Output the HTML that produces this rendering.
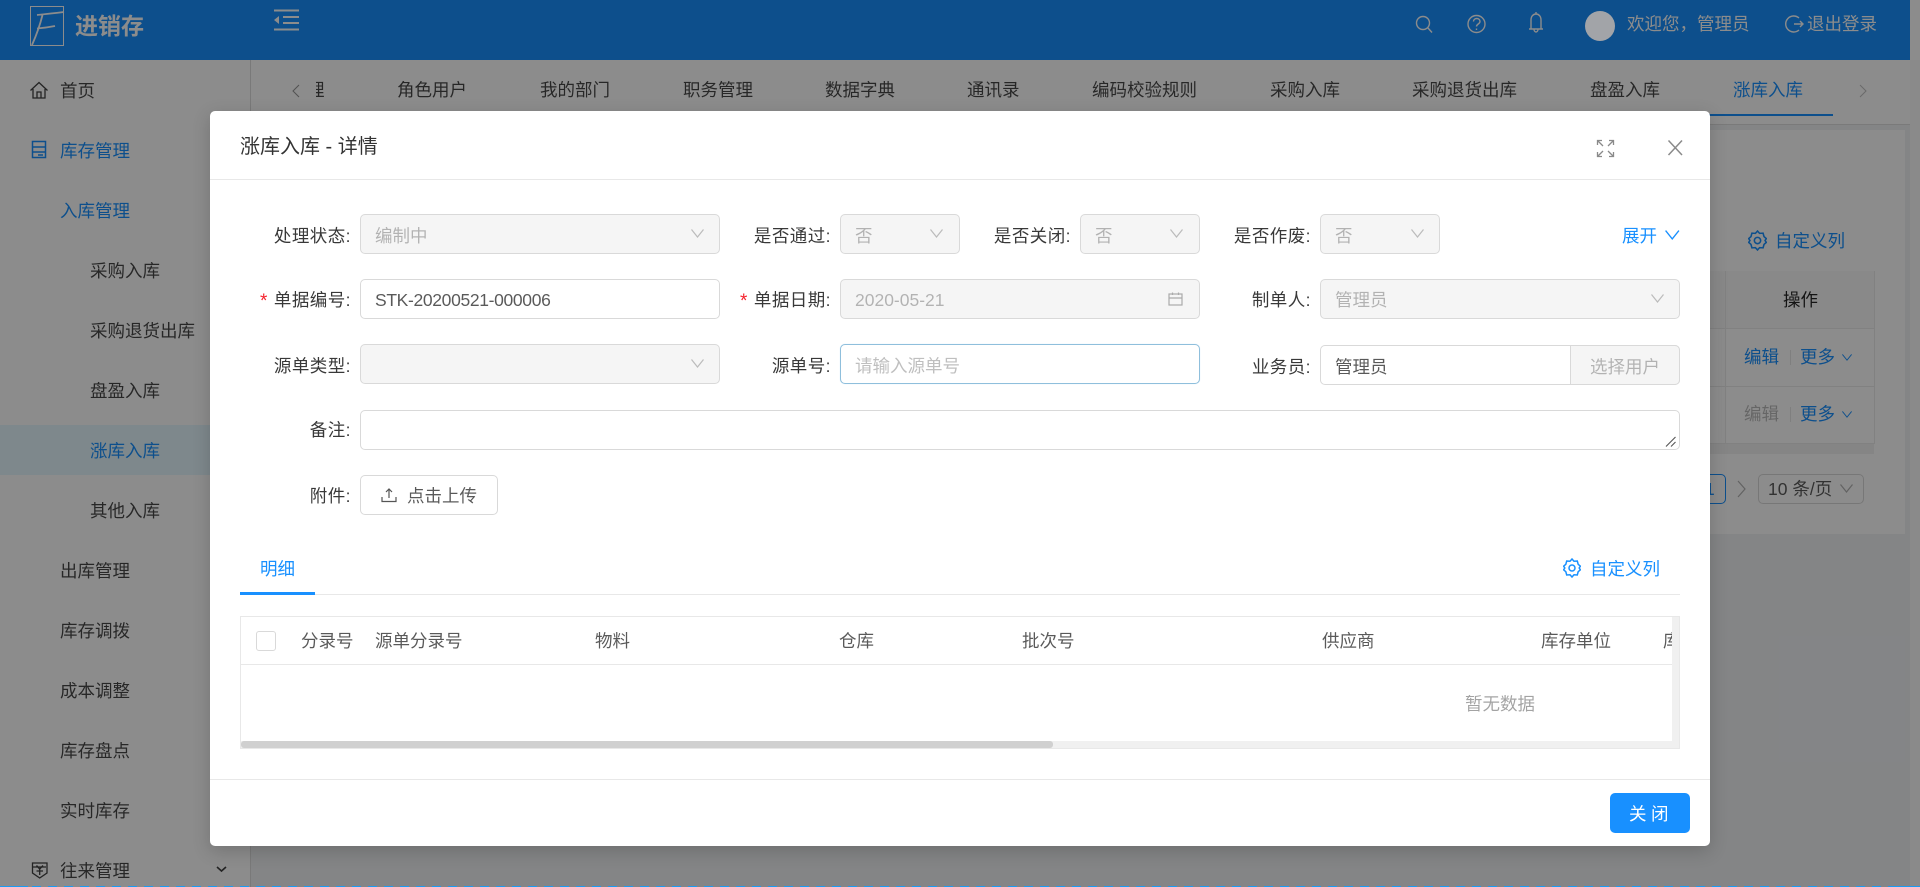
<!DOCTYPE html>
<html lang="zh-CN">
<head>
<meta charset="utf-8">
<title>进销存</title>
<style>
html,body{margin:0;padding:0;width:1920px;height:887px;overflow:hidden;background:#f0f2f5;}
body{position:relative;font-family:"Liberation Sans","Noto Sans CJK SC",sans-serif;font-size:17.5px;color:rgba(0,0,0,.65);}
div,span{box-sizing:border-box;}
.a{position:absolute;}
.t{position:absolute;white-space:nowrap;line-height:24px;}
.b{color:#1890ff;}
.m{color:rgba(0,0,0,.72);}
.d{color:rgba(0,0,0,.27);}
.lab{position:absolute;white-space:nowrap;line-height:24px;text-align:right;width:200px;color:rgba(0,0,0,.78);letter-spacing:.45px;}
.box{position:absolute;height:39.5px;border:1px solid #d9d9d9;border-radius:5px;background:#fff;}
.dis{background:#f5f5f5;}
.star{position:absolute;color:#f5222d;line-height:24px;font-size:19px;font-family:"Liberation Sans",sans-serif;}
svg{position:absolute;overflow:visible;fill:none;}
</style>
</head>
<body>
<svg width="0" height="0" style="position:absolute">
<defs>
<symbol id="chev" viewBox="0 0 13 9"><path d="M.5 .5 L6.5 8 L12.5 .5" fill="none" stroke="currentColor" stroke-width="1.2"/></symbol>
<symbol id="gear" viewBox="0 0 18 20"><path d="M9 1 L11 3.2 L14.3 3 L15.2 6.3 L17.4 8.2 L16.2 10 L17.4 11.8 L15.2 13.7 L14.3 17 L11 16.8 L9 19 L7 16.8 L3.7 17 L2.8 13.7 L.6 11.8 L1.8 10 L.6 8.2 L2.8 6.3 L3.7 3 L7 3.2 Z" fill="none" stroke="currentColor" stroke-width="1.5"/><circle cx="9" cy="10" r="3" fill="none" stroke="currentColor" stroke-width="1.5"/></symbol>
</defs>
</svg>

<!-- header -->
<div class="a" style="left:0;top:0;width:1910px;height:60px;background:#1890ff"></div>
<div class="a" style="left:1910px;top:60px;width:10px;height:827px;background:#fbfbfb"></div>
<div class="a" style="left:1910px;top:0;width:10px;height:60px;background:#fff"></div>
<svg style="left:0;top:0" width="320" height="60">
<rect x="30.5" y="6.5" width="33" height="39" stroke="#fff" stroke-width="1"/>
<path d="M37 15 C46 14 56 13 64 12 M42.5 15 C40 25 36 36 32 45 M37 28.5 C43 28 50 27 55 26" stroke="#fff" stroke-width="1.8"/>
<path d="M274 10.5 H299 M283 17 H299 M283 23 H299 M274 29.5 H299" stroke="#fff" stroke-width="2"/>
<path d="M279 16 V24 L274 20 Z" fill="#fff"/>
</svg>
<div class="t" style="left:75px;top:12px;font-size:23px;font-weight:700;color:#fff;line-height:28px">进销存</div>
<svg style="left:1400px;top:0" width="420" height="60" stroke="#fff" stroke-width="1.4">
<circle cx="23" cy="23" r="6.5"/><path d="M28 28 L32 32.5"/>
<circle cx="76.5" cy="24" r="8.5"/><path d="M73.5 21.5 C73.5 17.5 80 17.5 80 21.5 C80 24 76.5 24 76.5 26.5 M76.5 28.5 V30"/>
<path d="M129 29 H143 M131 29 V20 C131 12 141 12 141 20 V29 M136 12 V14 M134 29 C134 33 138 33 138 29"/>
<path d="M399 18 A8 8 0 1 0 399 30 M394 24 H403 M400 21 L403 24 L400 27"/>
</svg>
<div class="t" style="left:1627px;top:12px;color:#fff">欢迎您，管理员</div>
<div class="t" style="left:1807px;top:12px;color:#fff">退出登录</div>

<!-- sidebar -->
<div class="a" style="left:0;top:60px;width:251px;height:827px;background:#fff;border-right:1px solid #dcdcdc"></div>
<div class="a" style="left:0;top:425px;width:250px;height:50px;background:#e6f7ff"></div>
<svg style="left:0;top:60px" width="250" height="827" stroke="rgba(0,0,0,.75)" stroke-width="1.3">
<path d="M30.5 30.5 L39 22.5 L47.5 30.5 M33 29 V38 H45 V29 M37 38 V32 H41 V38"/>
<g stroke="#1890ff" stroke-width="1.5"><rect x="32.5" y="81.5" width="13" height="16"/><path d="M32.5 87 H45.5 M32.5 92 H45.5 M38 95 H43"/></g>
<path d="M32.5 803 H47 V813 L39.7 818 L32.5 813 Z M33 807 H46 M36.5 805.5 L39.7 809 L43 805.5 M39.7 809 V815 M36.5 811 H43"/>
<path d="M217 807 L221.5 811 L226 807" stroke-width="1.6"/>
</svg>
<div class="t m" style="left:60px;top:79px">首页</div>
<div class="t b" style="left:60px;top:139px">库存管理</div>
<div class="t b" style="left:60px;top:199px">入库管理</div>
<div class="t m" style="left:90px;top:259px">采购入库</div>
<div class="t m" style="left:90px;top:319px">采购退货出库</div>
<div class="t m" style="left:90px;top:379px">盘盈入库</div>
<div class="t b" style="left:90px;top:439px">涨库入库</div>
<div class="t m" style="left:90px;top:499px">其他入库</div>
<div class="t m" style="left:60px;top:559px">出库管理</div>
<div class="t m" style="left:60px;top:619px">库存调拨</div>
<div class="t m" style="left:60px;top:679px">成本调整</div>
<div class="t m" style="left:60px;top:739px">库存盘点</div>
<div class="t m" style="left:60px;top:799px">实时库存</div>
<div class="t m" style="left:60px;top:859px">往来管理</div>

<!-- tabs -->
<div class="a" style="left:251px;top:60px;width:1659px;height:65px;background:#fff;border-bottom:1px solid #dedede"></div>
<svg style="left:0;top:60px" width="1910" height="60" stroke="rgba(0,0,0,.42)" stroke-width="1">
<path d="M299 25 L293 31 L299 37"/>
<path d="M1860 25 L1866 31 L1860 37" stroke="rgba(0,0,0,.25)"/>
</svg>
<div class="a" style="left:316px;top:78px;width:9px;height:24px;overflow:hidden"><div class="t m" style="left:-9px;top:0">理</div></div>
<div class="t m" style="left:397px;top:78px">角色用户</div>
<div class="t m" style="left:540px;top:78px">我的部门</div>
<div class="t m" style="left:683px;top:78px">职务管理</div>
<div class="t m" style="left:825px;top:78px">数据字典</div>
<div class="t m" style="left:967px;top:78px">通讯录</div>
<div class="t m" style="left:1092px;top:78px">编码校验规则</div>
<div class="t m" style="left:1270px;top:78px">采购入库</div>
<div class="t m" style="left:1412px;top:78px">采购退货出库</div>
<div class="t m" style="left:1590px;top:78px">盘盈入库</div>
<div class="t b" style="left:1733px;top:78px">涨库入库</div>
<div class="a" style="left:1700px;top:113.5px;width:133px;height:2px;background:#1890ff"></div>

<!-- page card behind -->
<div class="a" style="left:251px;top:130px;width:1654px;height:404px;background:#fff"></div>
<svg style="left:1748px;top:230px;color:#1890ff" width="19" height="21"><use href="#gear"/></svg>
<div class="t b" style="left:1775px;top:229px">自定义列</div>
<div class="a" style="left:1700px;top:271px;width:175px;height:173px;border:1px solid #ececec;border-left:0;background:#fff"></div>
<div class="a" style="left:1700px;top:271px;width:174px;height:58px;background:#fafafa;border-bottom:1px solid #ececec"></div>
<div class="a" style="left:1700px;top:386px;width:174px;height:1px;background:#ececec"></div>
<div class="a" style="left:1725px;top:271px;width:1px;height:172px;background:#ececec;box-shadow:-4px 0 5px rgba(0,0,0,.07)"></div>
<div class="a" style="left:1700px;top:444px;width:174px;height:10px;background:#f3f3f3"></div>
<div class="t" style="left:1783px;top:288px;color:rgba(0,0,0,.85)">操作</div>
<div class="t b" style="left:1744px;top:345px">编辑</div>
<div class="a" style="left:1790px;top:350px;width:1px;height:15px;background:#e8e8e8"></div>
<div class="t b" style="left:1800px;top:345px">更多</div>
<svg style="left:1842px;top:354px;color:#1890ff" width="10" height="7"><use href="#chev"/></svg>
<div class="t d" style="left:1744px;top:402px">编辑</div>
<div class="a" style="left:1790px;top:407px;width:1px;height:15px;background:#e8e8e8"></div>
<div class="t b" style="left:1800px;top:402px">更多</div>
<svg style="left:1842px;top:411px;color:#1890ff" width="10" height="7"><use href="#chev"/></svg>
<div class="a" style="left:1690px;top:474px;width:36px;height:30px;border:1px solid #1890ff;border-radius:5px;background:#fff"></div>
<div class="t b" style="left:1705px;top:477px">1</div>
<svg style="left:1736px;top:480px" width="12" height="20" stroke="rgba(0,0,0,.3)" stroke-width="1.2"><path d="M2 1 L9 9 L2 17"/></svg>
<div class="a" style="left:1758px;top:474px;width:106px;height:30px;border:1px solid #d9d9d9;border-radius:5px"></div>
<div class="t" style="left:1768px;top:477px">10 条/页</div>
<svg style="left:1840px;top:484px;color:rgba(0,0,0,.3)" width="13" height="9"><use href="#chev"/></svg>

<!-- mask -->
<div class="a" style="left:0;top:0;width:1920px;height:887px;background:rgba(0,0,0,.45)"></div>
<div class="a" style="left:1585px;top:11px;width:30px;height:30px;border-radius:50%;background:#a2a4a8"></div>

<!-- modal -->
<div class="a" style="left:210px;top:111px;width:1500px;height:735px;background:#fff;border-radius:5px;box-shadow:0 5px 18px rgba(0,0,0,.18)"></div>
<div class="a" style="left:210px;top:179px;width:1500px;height:1px;background:#e8e8e8"></div>
<div class="t" style="left:240px;top:135px;font-size:20px;color:rgba(0,0,0,.8)">涨库入库 - 详情</div>
<svg style="left:1590px;top:130px" width="100" height="35" stroke="#8a8a8a" stroke-width="1.3">
<path d="M8 11 L13 16 M7.5 15 V10.5 H12 M23 11 L18 16 M19 10.5 H23.5 V15 M8 26 L13 21 M7.5 22 V26.5 H12 M23 26 L18 21 M19 26.5 H23.5 V22"/>
<path d="M78.5 10.5 L92 25 M92 10.5 L78.5 25" stroke-width="1.5"/>
</svg>

<!-- form row 1 -->
<div class="lab" style="left:151px;top:224px">处理状态:</div>
<div class="box dis" style="left:360px;top:214px;width:360px"></div>
<div class="t d" style="left:375px;top:224px">编制中</div>
<svg style="left:691px;top:229px;color:#bbb" width="13" height="9"><use href="#chev"/></svg>
<div class="lab" style="left:631px;top:224px">是否通过:</div>
<div class="box dis" style="left:840px;top:214px;width:120px"></div>
<div class="t d" style="left:855px;top:224px">否</div>
<svg style="left:930px;top:229px;color:#bbb" width="13" height="9"><use href="#chev"/></svg>
<div class="lab" style="left:871px;top:224px">是否关闭:</div>
<div class="box dis" style="left:1080px;top:214px;width:120px"></div>
<div class="t d" style="left:1095px;top:224px">否</div>
<svg style="left:1170px;top:229px;color:#bbb" width="13" height="9"><use href="#chev"/></svg>
<div class="lab" style="left:1111px;top:224px">是否作废:</div>
<div class="box dis" style="left:1320px;top:214px;width:120px"></div>
<div class="t d" style="left:1335px;top:224px">否</div>
<svg style="left:1411px;top:229px;color:#bbb" width="13" height="9"><use href="#chev"/></svg>
<div class="t b" style="left:1622px;top:224px">展开</div>
<svg style="left:1664.5px;top:230px;color:#1890ff" width="14.5" height="10"><use href="#chev"/></svg>

<!-- row 2 -->
<div class="star" style="left:260px;top:290px">*</div>
<div class="lab" style="left:151px;top:288px">单据编号:</div>
<div class="box" style="left:360px;top:279px;width:360px"></div>
<div class="t" style="left:375px;top:288px;letter-spacing:-.34px">STK-20200521-000006</div>
<div class="star" style="left:740px;top:290px">*</div>
<div class="lab" style="left:631px;top:288px">单据日期:</div>
<div class="box dis" style="left:840px;top:279px;width:360px"></div>
<div class="t d" style="left:855px;top:288px">2020-05-21</div>
<svg style="left:1168px;top:292px" width="16" height="15" stroke="#aaa" stroke-width="1.2"><rect x="1" y="2" width="13" height="11"/><path d="M1 6 H14 M4.5 .5 V3 M10.5 .5 V3"/></svg>
<div class="lab" style="left:1111px;top:288px">制单人:</div>
<div class="box dis" style="left:1320px;top:279px;width:360px"></div>
<div class="t d" style="left:1335px;top:288px">管理员</div>
<svg style="left:1651px;top:294px;color:#bbb" width="13" height="9"><use href="#chev"/></svg>

<!-- row 3 -->
<div class="lab" style="left:151px;top:354px">源单类型:</div>
<div class="box dis" style="left:360px;top:344px;width:360px"></div>
<svg style="left:691px;top:359px;color:#bbb" width="13" height="9"><use href="#chev"/></svg>
<div class="lab" style="left:631px;top:354px">源单号:</div>
<div class="box" style="left:840px;top:344px;width:360px;border-color:#8fbfdc;box-shadow:0 0 1px rgba(24,144,255,.2)"></div>
<div class="t" style="left:855px;top:354px;color:#bfbfbf">请输入源单号</div>
<div class="lab" style="left:1111px;top:355px">业务员:</div>
<div class="box" style="left:1320px;top:345px;width:360px"></div>
<div class="a" style="left:1570px;top:345px;width:110px;height:39.5px;background:#f5f5f5;border:1px solid #d9d9d9;border-radius:0 5px 5px 0"></div>
<div class="t" style="left:1335px;top:355px">管理员</div>
<div class="t d" style="left:1590px;top:355px">选择用户</div>

<!-- row 4 -->
<div class="lab" style="left:151px;top:418px">备注:</div>
<div class="box" style="left:360px;top:410px;width:1320px"></div>
<svg style="left:1664px;top:435px" width="14" height="14" stroke="#555" stroke-width="1.1"><path d="M2 11.5 L11.5 2 M7 11.5 L11.5 7"/></svg>

<!-- row 5 -->
<div class="lab" style="left:151px;top:484px">附件:</div>
<div class="box" style="left:360px;top:475px;width:138px"></div>
<svg style="left:381px;top:487px" width="16" height="16" stroke="#555" stroke-width="1.2"><path d="M1 10 V14.5 H15 V10 M8 11 V2 M5 5 L8 2 L11 5"/></svg>
<div class="t" style="left:407px;top:484px">点击上传</div>

<!-- detail tab -->
<div class="t b" style="left:260px;top:557px">明细</div>
<div class="a" style="left:240px;top:594px;width:1440px;height:1px;background:#e8e8e8"></div>
<div class="a" style="left:240px;top:592px;width:75px;height:3px;background:#1890ff"></div>
<svg style="left:1563px;top:558px;color:#1890ff" width="18" height="20"><use href="#gear"/></svg>
<div class="t b" style="left:1590px;top:557px">自定义列</div>

<!-- table -->
<div class="a" style="left:240px;top:616px;width:1440px;height:133px;border:1px solid #e8e8e8"></div>
<div class="a" style="left:241px;top:664px;width:1438px;height:1px;background:#e8e8e8"></div>
<div class="a" style="left:256px;top:631px;width:20px;height:20px;border:1px solid #d9d9d9;border-radius:3px"></div>
<div class="t" style="left:301px;top:629px">分录号</div>
<div class="t" style="left:375px;top:629px">源单分录号</div>
<div class="t" style="left:595px;top:629px">物料</div>
<div class="t" style="left:839px;top:629px">仓库</div>
<div class="t" style="left:1022px;top:629px">批次号</div>
<div class="t" style="left:1322px;top:629px">供应商</div>
<div class="t" style="left:1541px;top:629px">库存单位</div>
<div class="a" style="left:1663px;top:629px;width:9px;height:24px;overflow:hidden"><div class="t" style="left:0;top:0">库</div></div>
<div class="t" style="left:1465px;top:692px;color:rgba(0,0,0,.36)">暂无数据</div>
<div class="a" style="left:1672px;top:617px;width:7px;height:131px;background:#f0f0f0"></div>
<div class="a" style="left:241px;top:741px;width:1438px;height:7px;background:#f0f0f0"></div>
<div class="a" style="left:241px;top:741px;width:812px;height:7px;background:#d0d0d0;border-radius:3px"></div>

<!-- footer -->
<div class="a" style="left:210px;top:779px;width:1500px;height:1px;background:#e8e8e8"></div>
<div class="a" style="left:1610px;top:793px;width:80px;height:40px;background:#1890ff;border-radius:5px"></div>
<div class="t" style="left:1629px;top:802px;color:#fff;letter-spacing:4.5px">关闭</div>

<!-- bottom dashes -->
<div class="a" style="left:0;top:885.5px;width:1920px;height:1.5px;background:repeating-linear-gradient(90deg,#1a9bf5 0,#1a9bf5 9px,transparent 9px,transparent 16px)"></div>
<div class="a" style="left:0;top:885.5px;width:28px;height:1.5px;background:#1a9bf5"></div>
<div class="a" style="left:1893px;top:885.5px;width:27px;height:1.5px;background:#1a9bf5"></div>
</body>
</html>
